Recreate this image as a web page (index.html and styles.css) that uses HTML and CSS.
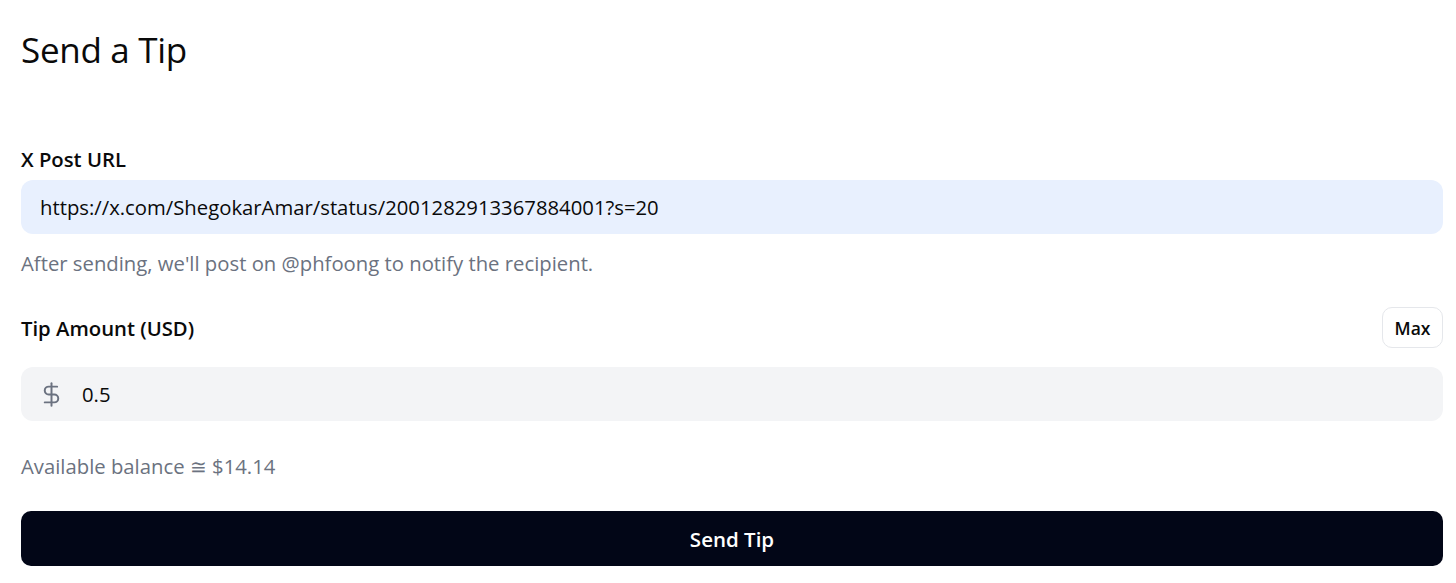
FILE: index.html
```html
<!DOCTYPE html>
<html lang="en">
<head>
<meta charset="utf-8">
<title>Send a Tip</title>
<link rel="stylesheet" href="styles.css">
</head>
<body>
<main class="page">
  <h1 class="title">Send a Tip</h1>
  <form class="form">
    <div class="field">
      <label class="label" for="url">X Post URL</label>
      <div class="input url-input" id="url">https://x.com/ShegokarAmar/status/2001282913367884001?s=20</div>
      <p class="hint">After sending, we'll post on @phfoong to notify the recipient.</p>
    </div>
    <div class="field amount-field">
      <div class="label-row">
        <span class="label">Tip Amount (USD)</span>
        <button type="button" class="max-btn">Max</button>
      </div>
      <div class="input amount-input">
        <svg class="dollar" viewBox="0 0 24 24" width="27" height="27" fill="none" stroke="currentColor" stroke-width="1.75" stroke-linecap="round" stroke-linejoin="round"><line x1="12" y1="2" x2="12" y2="22"/><path d="M17 5H9.5a3.5 3.5 0 0 0 0 7h5a3.5 3.5 0 0 1 0 7H6"/></svg>
        <span class="amount-value">0.5</span>
      </div>
      <p class="balance">Available balance ≅ $14.14</p>
    </div>
    <button type="button" class="send-btn">Send Tip</button>
  </form>
</main>
</body>
</html>
```
FILE: styles.css
```css
* { box-sizing: border-box; }
html, body { margin: 0; padding: 0; background: #ffffff; }
body {
  font-family: "Open Sans", "Noto Sans", "Liberation Sans", sans-serif;
  color: #0a0a0a;
}
.page {
  padding: 26px 13px 0 21px;
}
.title {
  margin: 0;
  font-size: 35px;
  font-weight: 400;
  line-height: 48px;
  letter-spacing: -0.3px;
}
.form {
  margin-top: 71px;
  display: flex;
  flex-direction: column;
}
.field { display: flex; flex-direction: column; }
.label {
  font-size: 20.3px;
  font-weight: 600;
  line-height: 28px;
  color: #0a0a0a;
}
.input {
  margin-top: 7px;
  height: 54px;
  border-radius: 12px;
  display: flex;
  align-items: center;
  font-size: 20.3px;
}
.url-input {
  background: #e8f0fe;
  padding-left: 19px;
}
.hint {
  margin: 15px 0 0;
  font-size: 20.3px;
  line-height: 28px;
  color: #6b7280;
}
.amount-field { margin-top: 30px; }
.label-row {
  display: flex;
  align-items: center;
  justify-content: space-between;
}
.max-btn {
  width: 61px;
  height: 41px;
  border: 1px solid #e5e7eb;
  border-radius: 10px;
  background: #ffffff;
  font-family: inherit;
  font-size: 17.5px;
  font-weight: 600;
  color: #0a0a0a;
  padding: 0;
}
.amount-input {
  margin-top: 19px;
  background: #f3f4f6;
  padding-left: 17px;
}
.dollar { color: #6b7280; flex: none; }
.amount-value { margin-left: 17px; }
.balance {
  margin: 31px 0 0;
  font-size: 20.3px;
  line-height: 28px;
  color: #6b7280;
}
.send-btn {
  margin-top: 31px;
  height: 55px;
  border: none;
  border-radius: 10px;
  background: #020617;
  color: #ffffff;
  font-family: inherit;
  font-size: 20.5px;
  font-weight: 600;
}
```
